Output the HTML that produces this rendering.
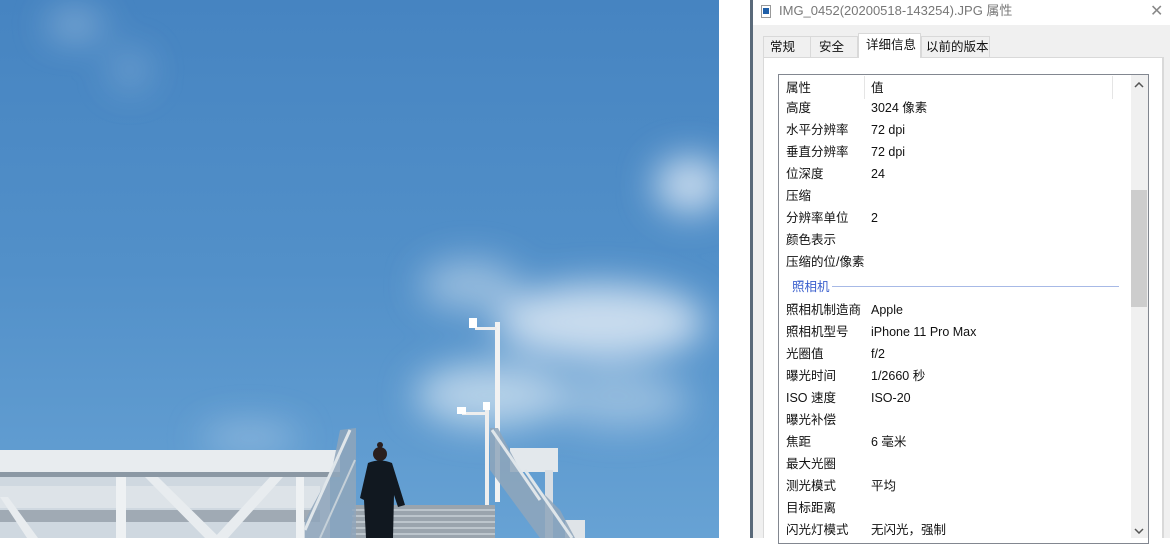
<!DOCTYPE html>
<html><head><meta charset="utf-8"><style>
*{margin:0;padding:0;box-sizing:border-box}
body{width:1170px;height:538px;overflow:hidden;background:#fff;position:relative;font-family:"Liberation Sans","Noto Sans CJK SC",sans-serif;font-size:12.5px;color:#111}
.a{position:absolute}
.row{position:absolute;left:786px;height:22px;line-height:22px;white-space:nowrap}
.row span{position:absolute;left:85px}
.tab{position:absolute;border:1px solid #d9d9d9;border-bottom:none;background:#f0f0f0;line-height:18px}
</style></head><body>
<svg class="a" style="left:0;top:0" width="719" height="538" viewBox="0 0 719 538">
<defs>
<linearGradient id="sky" x1="0" y1="0" x2="0" y2="1"><stop offset="0" stop-color="#4684c1"/><stop offset="0.5" stop-color="#5290c9"/><stop offset="1" stop-color="#67a2d4"/></linearGradient>
<filter id="bl" x="-50%" y="-50%" width="200%" height="200%"><feGaussianBlur stdDeviation="18"/></filter>
</defs>
<rect width="719" height="538" fill="url(#sky)"/>
<g filter="url(#bl)" fill="#dde9f4">
<ellipse cx="600" cy="322" rx="105" ry="38" opacity="0.85"/>
<ellipse cx="470" cy="285" rx="50" ry="25" opacity="0.5"/>
<ellipse cx="490" cy="395" rx="75" ry="32" opacity="0.7"/>
<ellipse cx="620" cy="400" rx="70" ry="28" opacity="0.45"/>
<ellipse cx="690" cy="185" rx="35" ry="28" opacity="0.85"/>
<ellipse cx="250" cy="438" rx="50" ry="14" opacity="0.4"/>
<ellipse cx="75" cy="25" rx="28" ry="12" opacity="0.5"/>
<ellipse cx="130" cy="70" rx="20" ry="20" opacity="0.25"/>
</g>
<rect x="495" y="322" width="5" height="180" fill="#f2f2f2"/>
<rect x="475" y="327" width="22" height="3" fill="#eee"/>
<rect x="469" y="318" width="8" height="10" fill="#fff"/>
<rect x="485" y="410" width="4" height="95" fill="#eee"/>
<rect x="462" y="412" width="25" height="3" fill="#eee"/>
<rect x="457" y="407" width="9" height="7" fill="#fff"/>
<rect x="483" y="402" width="7" height="8" fill="#fff"/>
<rect x="0" y="450" width="340" height="24" fill="#e8ecef"/>
<rect x="0" y="472" width="340" height="5" fill="#8b98a4"/>
<rect x="0" y="477" width="330" height="61" fill="#cfd8e0"/>
<rect x="0" y="486" width="320" height="22" fill="#dde3e8"/>
<rect x="0" y="510" width="320" height="12" fill="#a0aab4"/>
<rect x="116" y="477" width="10" height="61" fill="#eef1f3"/>
<rect x="296" y="477" width="8" height="61" fill="#eef1f3"/>
<polygon points="145,477 158,477 220,538 205,538" fill="#e8ecef"/>
<polygon points="270,477 283,477 228,538 214,538" fill="#e8ecef"/>
<polygon points="0,497 8,497 38,538 27,538" fill="#e8ecef"/>
<rect x="510" y="448" width="48" height="24" fill="#e3e8ec"/>
<rect x="545" y="470" width="8" height="68" fill="#d8dee4"/>
<rect x="565" y="520" width="20" height="18" fill="#dfe4e8"/>
<polygon points="355,505 495,505 495,538 350,538" fill="#9aa4ad"/>
<g stroke="#c8d0d6" stroke-width="1.5"><line x1="352" y1="510" x2="495" y2="510"/><line x1="352" y1="516" x2="495" y2="516"/><line x1="352" y1="522" x2="495" y2="522"/><line x1="352" y1="528" x2="495" y2="528"/><line x1="352" y1="534" x2="495" y2="534"/></g>
<polygon points="340,430 356,428 356,538 305,538 305,520 332,470" fill="#8fa6bb" opacity="0.85"/>
<line x1="305" y1="530" x2="350" y2="430" stroke="#e0e6ea" stroke-width="3"/>
<line x1="320" y1="538" x2="355" y2="460" stroke="#c5d0d8" stroke-width="2"/>
<polygon points="490,428 498,428 520,470 560,510 575,538 540,538 490,470" fill="#8fa6bb" opacity="0.85"/>
<line x1="492" y1="430" x2="540" y2="500" stroke="#e0e6ea" stroke-width="3"/>
<line x1="525" y1="470" x2="572" y2="538" stroke="#dfe6ea" stroke-width="3"/>
<circle cx="380" cy="454" r="7" fill="#2a1f1e"/>
<circle cx="380" cy="445" r="3" fill="#2a1f1e"/>
<path d="M368 463 Q380 458 392 463 L405 505 L398 507 L394 495 L393 538 L366 538 L364 500 L360 498 Z" fill="#111820"/>
</svg>
<div class="a" style="left:750px;top:0;width:3px;height:538px;background:#5a6a7a"></div>
<div class="a" style="left:753px;top:0;width:417px;height:538px;background:#f0f0f0"></div>
<div class="a" style="left:753px;top:0;width:417px;height:25px;background:#fff"></div>
<div class="a" style="left:761px;top:5px;width:10px;height:13px;border:1px solid #999;background:#fff"><div style="margin:2px 1px;width:6px;height:6px;background:#1f5fa8"></div></div>
<div class="a" style="left:779px;top:2px;font-size:13px;color:#777;line-height:18px">IMG_0452(20200518-143254).JPG 属性</div>
<div class="a" style="left:763px;top:57px;width:400px;height:481px;background:#fff;border:1px solid #d9d9d9;border-bottom:none"></div>
<div class="tab" style="left:763px;top:36px;width:48px;height:21px;padding:1px 0 0 6px">常规</div>
<div class="tab" style="left:810px;top:36px;width:48px;height:21px;padding:1px 0 0 8px">安全</div>
<div class="tab" style="left:858px;top:33px;width:63px;height:25px;background:#fff;padding:2px 0 0 7px">详细信息</div>
<div class="tab" style="left:921px;top:36px;width:69px;height:21px;padding:1px 0 0 4px">以前的版本</div>
<div class="a" style="left:778px;top:74px;width:371px;height:470px;border:1px solid #828790;background:#fff"></div>
<div class="a" style="left:864px;top:76px;width:1px;height:23px;background:#e5e5e5"></div>
<div class="a" style="left:1112px;top:76px;width:1px;height:23px;background:#e5e5e5"></div>
<div class="a" style="left:1131px;top:75px;width:17px;height:463px;background:#f0f0f0"></div>
<div class="a" style="left:1131px;top:190px;width:16px;height:117px;background:#cdcdcd"></div>
<svg class="a" style="left:1134px;top:82px" width="10" height="6"><path d="M1 5 L5 1 L9 5" stroke="#555" stroke-width="1.5" fill="none"/></svg>
<svg class="a" style="left:1134px;top:528px" width="10" height="6"><path d="M1 1 L5 5 L9 1" stroke="#555" stroke-width="1.5" fill="none"/></svg>
<div class="a" style="left:1163px;top:57px;width:1px;height:481px;background:#d9d9d9"></div>
<div class="row" style="top:77px">属性<span>值</span></div>
<div class="row" style="top:97px">高度<span>3024 像素</span></div>
<div class="row" style="top:119px">水平分辨率<span>72 dpi</span></div>
<div class="row" style="top:141px">垂直分辨率<span>72 dpi</span></div>
<div class="row" style="top:163px">位深度<span>24</span></div>
<div class="row" style="top:185px">压缩</div>
<div class="row" style="top:207px">分辨率单位<span>2</span></div>
<div class="row" style="top:229px">颜色表示</div>
<div class="row" style="top:251px">压缩的位/像素</div>
<div class="row" style="top:276px;left:792px;color:#3a5fcd">照相机</div>
<div class="a" style="left:832px;top:286px;width:287px;height:1px;background:#a7b9e6"></div>
<div class="row" style="top:299px">照相机制造商<span>Apple</span></div>
<div class="row" style="top:321px">照相机型号<span>iPhone 11 Pro Max</span></div>
<div class="row" style="top:343px">光圈值<span>f/2</span></div>
<div class="row" style="top:365px">曝光时间<span>1/2660 秒</span></div>
<div class="row" style="top:387px">ISO 速度<span>ISO-20</span></div>
<div class="row" style="top:409px">曝光补偿</div>
<div class="row" style="top:431px">焦距<span>6 毫米</span></div>
<div class="row" style="top:453px">最大光圈</div>
<div class="row" style="top:475px">测光模式<span>平均</span></div>
<div class="row" style="top:497px">目标距离</div>
<div class="row" style="top:519px">闪光灯模式<span>无闪光，强制</span></div>
<div class="a" style="left:1150px;top:0;font-size:16px;color:#888;line-height:24px">✕</div>
</body></html>
